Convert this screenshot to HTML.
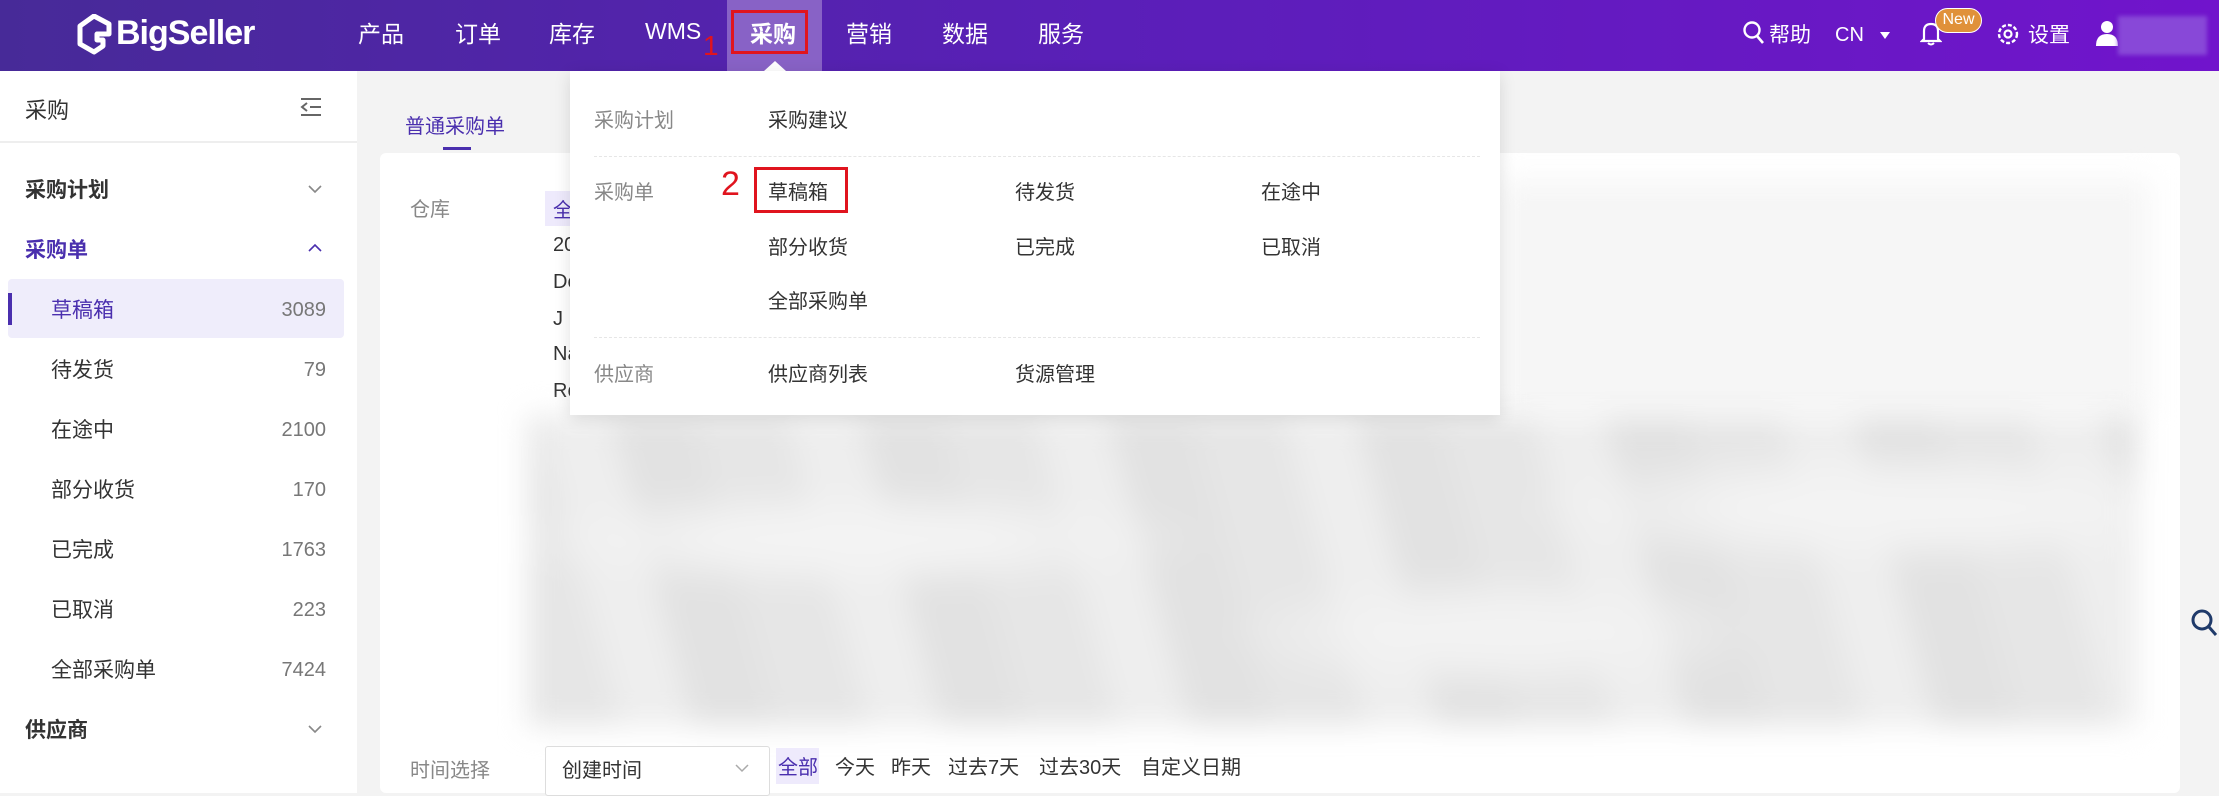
<!DOCTYPE html>
<html><head><meta charset="utf-8"><style>
*{margin:0;padding:0;box-sizing:border-box}
body{width:2219px;height:793px;overflow:hidden;background:#f3f3f3;font-family:"Liberation Sans","Noto Sans CJK SC",sans-serif;position:relative;color:#333}
.a{position:absolute;white-space:nowrap;line-height:1.45}
.c{margin-top:3px}
.hdr{left:0;top:0;width:2219px;height:71px;background:linear-gradient(90deg,#472a98 0%,#5a1fb8 50%,#7114cc 100%)}
.nav{color:#fff;font-size:23px;top:15px}
.side{left:0;top:71px;width:357px;height:722px;background:#fff}
.si{font-size:21px;color:#333;margin-top:3px}
.cnt{font-size:20px;color:#777;right:1893px}
.dd{font-size:20px;margin-top:3px}
.lab{color:#888}
</style></head><body>
<div class="a hdr"></div>
<svg class="a" style="left:76px;top:14px" width="36" height="42" viewBox="0 0 36 42"><path d="M18 2 L33 10 L33 20 L21 20 L21 26 L27 26 L27 32 L18 38 L4 30 L4 12 Z" fill="none" stroke="#fff" stroke-width="5" stroke-linejoin="round"/></svg>
<div class="a" style="left:116px;top:13px;color:#fff;font-size:34px;font-weight:bold;letter-spacing:-1px;line-height:40px">BigSeller</div>
<div class="a" style="left:727px;top:0;width:95px;height:71px;background:#8862c6"></div>
<div class="a" style="left:731px;top:10px;width:77px;height:44px;border:3px solid #e0141e"></div>
<div class="a" style="left:764px;top:61px;width:0;height:0;border-left:11px solid transparent;border-right:11px solid transparent;border-bottom:10px solid #fff"></div>
<div class="a nav c" style="left:358px">产品</div>
<div class="a nav c" style="left:455px">订单</div>
<div class="a nav c" style="left:549px">库存</div>
<div class="a nav" style="left:645px;top:15px">WMS</div>
<div class="a nav c" style="left:750px;font-weight:bold">采购</div>
<div class="a nav c" style="left:846px">营销</div>
<div class="a nav c" style="left:942px">数据</div>
<div class="a nav c" style="left:1038px">服务</div>
<div class="a" style="left:703px;top:26px;color:#e0141e;font-size:28px">1</div>
<svg class="a" style="left:1742px;top:20px" width="24" height="26" viewBox="0 0 24 26"><circle cx="10" cy="10" r="7.5" fill="none" stroke="#fff" stroke-width="2.4"/><path d="M15 16 L21 23" stroke="#fff" stroke-width="2.6"/></svg>
<div class="a c" style="left:1769px;top:18px;color:#fff;font-size:21px">帮助</div>
<div class="a" style="left:1835px;top:21px;color:#fff;font-size:20px">CN</div>
<div class="a" style="left:1880px;top:32px;width:0;height:0;border-left:5px solid transparent;border-right:5px solid transparent;border-top:7px solid #fff"></div>
<svg class="a" style="left:1920px;top:20px" width="22" height="26" viewBox="0 0 22 26"><path d="M4 19 L4 11 Q4 4 11 4 Q18 4 18 11 L18 19 L20 21 L2 21 Z" fill="none" stroke="#fff" stroke-width="2.2"/><path d="M8 23 Q11 26 14 23" stroke="#fff" stroke-width="2" fill="none"/></svg>
<div class="a" style="left:1935px;top:8px;width:47px;height:25px;border-radius:13px;background:#e0913a;border:1.5px solid #fff;color:#fff;font-size:16px;text-align:center;line-height:21px">New</div>
<svg class="a" style="left:1995px;top:21px" width="26" height="26" viewBox="0 0 26 26"><circle cx="13" cy="13" r="9" fill="none" stroke="#fff" stroke-width="2.4" stroke-dasharray="4 2"/><circle cx="13" cy="13" r="3.5" fill="none" stroke="#fff" stroke-width="2.2"/></svg>
<div class="a c" style="left:2028px;top:18px;color:#fff;font-size:21px">设置</div>
<svg class="a" style="left:2095px;top:19px" width="24" height="28" viewBox="0 0 24 28"><circle cx="12" cy="8" r="6" fill="#fff"/><path d="M1 27 Q1 15 12 15 Q23 15 23 27 Z" fill="#fff"/></svg>
<div class="a" style="left:2118px;top:16px;width:89px;height:39px;background:#8848d8;filter:blur(2px)"></div>
<div class="a side"></div>
<div class="a si" style="left:25px;top:92px;font-size:22px">采购</div>
<svg class="a" style="left:300px;top:97px" width="22" height="20" viewBox="0 0 22 20"><path d="M1 2 H21 M10 10 H21 M1 18 H21 M7 6 L2 10 L7 14" stroke="#666" stroke-width="2" fill="none"/></svg>
<div class="a" style="left:0;top:141px;width:357px;height:2px;background:#eee"></div>
<div class="a si" style="left:25px;top:173px;font-weight:bold">采购计划</div>
<svg class="a" style="left:307px;top:183px" width="16" height="12"><path d="M2 3 L8 9 L14 3" stroke="#888" stroke-width="1.6" fill="none"/></svg>
<div class="a si" style="left:25px;top:233px;font-weight:bold;color:#4a2fae">采购单</div>
<svg class="a" style="left:307px;top:242px" width="16" height="12"><path d="M2 9 L8 3 L14 9" stroke="#4a2fae" stroke-width="1.6" fill="none"/></svg>
<div class="a" style="left:8px;top:279px;width:336px;height:59px;background:#efedfb;border-radius:4px"></div>
<div class="a" style="left:8px;top:293px;width:4px;height:32px;background:#4a2fae"></div>
<div class="a si" style="left:51px;top:293px;color:#4a2fae">草稿箱</div><div class="a cnt" style="top:296px">3089</div>
<div class="a si" style="left:51px;top:353px">待发货</div><div class="a cnt" style="top:356px">79</div>
<div class="a si" style="left:51px;top:413px">在途中</div><div class="a cnt" style="top:416px">2100</div>
<div class="a si" style="left:51px;top:473px">部分收货</div><div class="a cnt" style="top:476px">170</div>
<div class="a si" style="left:51px;top:533px">已完成</div><div class="a cnt" style="top:536px">1763</div>
<div class="a si" style="left:51px;top:593px">已取消</div><div class="a cnt" style="top:596px">223</div>
<div class="a si" style="left:51px;top:653px">全部采购单</div><div class="a cnt" style="top:656px">7424</div>
<div class="a si" style="left:25px;top:713px;font-weight:bold">供应商</div>
<svg class="a" style="left:307px;top:723px" width="16" height="12"><path d="M2 3 L8 9 L14 3" stroke="#888" stroke-width="1.6" fill="none"/></svg>
<div class="a c" style="left:405px;top:110px;font-size:20px;color:#4a2fae">普通采购单</div>
<div class="a" style="left:443px;top:147px;width:28px;height:3px;background:#4a2fae"></div>
<div class="a" style="left:380px;top:153px;width:1800px;height:640px;background:#fff;border-radius:6px"></div>
<div class="a c" style="left:410px;top:193px;font-size:20px;color:#888">仓库</div>
<div class="a" style="left:545px;top:191px;width:30px;height:35px;background:#eeeafc"></div>
<div class="a c" style="left:553px;top:194px;font-size:20px;color:#4a2fae">全</div>
<div class="a" style="left:553px;top:231px;font-size:20px">20</div>
<div class="a" style="left:553px;top:268px;font-size:20px">De</div>
<div class="a" style="left:553px;top:305px;font-size:20px">J</div>
<div class="a" style="left:553px;top:340px;font-size:20px">Na</div>
<div class="a" style="left:553px;top:377px;font-size:20px">Ro</div>
<div class="a" style="left:1500px;top:180px;width:650px;height:235px;background:#f6f6f6;filter:blur(14px)"></div>
<div class="a" style="left:528px;top:415px;width:1610px;height:311px;background:radial-gradient(ellipse at 20% 40%,#f3f3f3 0 8%,transparent 20%),radial-gradient(ellipse at 60% 70%,#f2f2f2 0 8%,transparent 20%),radial-gradient(ellipse at 85% 30%,#f3f3f3 0 8%,transparent 20%),repeating-linear-gradient(75deg,#e6e6e6 0 90px,#eeeeee 90px 160px,#e2e2e2 160px 240px);filter:blur(14px)"></div>
<svg class="a" style="left:2190px;top:608px" width="29" height="32" viewBox="0 0 29 32"><circle cx="12" cy="12" r="9" fill="none" stroke="#1f3a6a" stroke-width="3"/><path d="M19 19 L26 27" stroke="#1f3a6a" stroke-width="3"/></svg>
<div class="a c" style="left:410px;top:754px;font-size:20px;color:#888">时间选择</div>
<div class="a" style="left:545px;top:746px;width:225px;height:50px;border:1px solid #ddd;border-radius:3px;background:#fff"></div>
<div class="a c" style="left:562px;top:754px;font-size:20px">创建时间</div>
<svg class="a" style="left:734px;top:762px" width="16" height="12"><path d="M2 3 L8 9 L14 3" stroke="#aaa" stroke-width="1.5" fill="none"/></svg>
<div class="a" style="left:776px;top:748px;width:43px;height:36px;background:#eeeafc"></div>
<div class="a c" style="left:778px;top:751px;font-size:20px;color:#4a2fae">全部</div>
<div class="a c" style="left:835px;top:751px;font-size:20px">今天</div>
<div class="a c" style="left:891px;top:751px;font-size:20px">昨天</div>
<div class="a c" style="left:948px;top:751px;font-size:20px">过去7天</div>
<div class="a c" style="left:1039px;top:751px;font-size:20px">过去30天</div>
<div class="a c" style="left:1141px;top:751px;font-size:20px">自定义日期</div>
<div class="a" style="left:570px;top:71px;width:930px;height:344px;background:#fff;box-shadow:0 4px 16px rgba(0,0,0,.12)"></div>
<div class="a dd lab" style="left:594px;top:104px">采购计划</div>
<div class="a dd" style="left:768px;top:104px">采购建议</div>
<div class="a" style="left:594px;top:156px;width:886px;border-top:1px dashed #e6e6e6"></div>
<div class="a dd lab" style="left:594px;top:176px">采购单</div>
<div class="a dd" style="left:768px;top:176px">草稿箱</div>
<div class="a dd" style="left:1015px;top:176px">待发货</div>
<div class="a dd" style="left:1261px;top:176px">在途中</div>
<div class="a dd" style="left:768px;top:231px">部分收货</div>
<div class="a dd" style="left:1015px;top:231px">已完成</div>
<div class="a dd" style="left:1261px;top:231px">已取消</div>
<div class="a dd" style="left:768px;top:285px">全部采购单</div>
<div class="a" style="left:594px;top:337px;width:886px;border-top:1px dashed #e6e6e6"></div>
<div class="a dd lab" style="left:594px;top:358px">供应商</div>
<div class="a dd" style="left:768px;top:358px">供应商列表</div>
<div class="a dd" style="left:1015px;top:358px">货源管理</div>
<div class="a" style="left:754px;top:167px;width:94px;height:46px;border:3px solid #e0141e"></div>
<div class="a" style="left:721px;top:160px;color:#e0141e;font-size:34px">2</div>
</body></html>
